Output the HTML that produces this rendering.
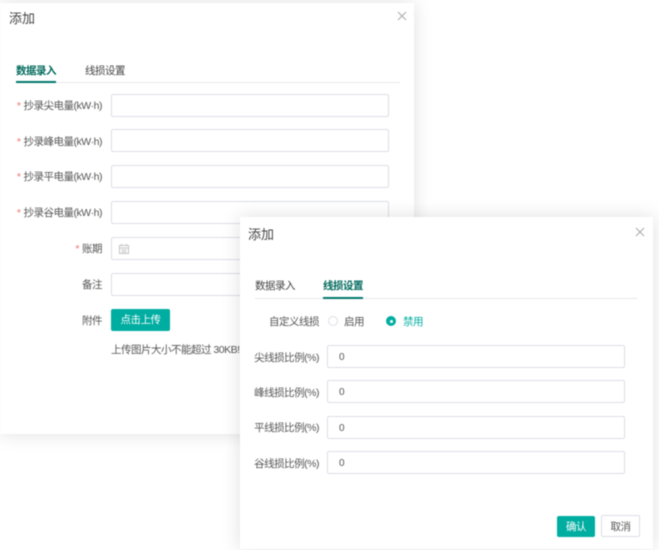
<!DOCTYPE html>
<html><head><meta charset="utf-8"><style>
html,body{margin:0;padding:0;width:659px;height:550px;overflow:hidden;background:#fff}
body{font-family:"Liberation Sans","Noto Sans CJK SC",sans-serif;color:#555;font-size:10.5px;letter-spacing:-.5px;position:relative}
#w{position:absolute;left:0;top:0;width:659px;height:550px;filter:blur(.4px)}
.d{position:absolute;background:#fff;box-shadow:0 0 18px rgba(0,0,0,.13)}
.a{position:absolute;white-space:nowrap;line-height:16px}
.r{text-align:right}
.i{position:absolute;box-sizing:border-box;border:1px solid #dcdfe6;border-radius:2px;background:#fff;height:23px}
.s{color:#f56c6c;margin-right:3px}
.t{font-size:13px;letter-spacing:0;color:#444;line-height:20px}
.tab{color:#444}
.on{color:#00695c;font-weight:bold}
.v{padding-left:11px;line-height:23px;font-size:10px;letter-spacing:0;color:#555}
</style></head><body><div id="w">
<div class="d" style="left:0;top:3px;width:414px;height:431px">
<div class="a t" style="left:9px;top:6px">添加</div>
<svg class="a" style="left:397px;top:8px" width="10" height="10"><path d="M1 1L9 9M9 1L1 9" stroke="#aaa" stroke-width="1" fill="none"/></svg>
<div class="a tab on" style="left:16px;top:60px">数据录入</div>
<div class="a tab" style="left:85px;top:60px">线损设置</div>
<div class="a" style="left:16px;top:79px;width:384px;height:1px;background:#e8e8e8"></div>
<div class="a" style="left:16px;top:78px;width:40px;height:2px;background:#00796b"></div>
<div class="a r" style="left:0;width:102px;top:95px"><span class="s">*</span>抄录尖电量(kW·h)</div>
<div class="i" style="left:111px;top:91px;width:278px"></div>
<div class="a r" style="left:0;width:102px;top:131px"><span class="s">*</span>抄录峰电量(kW·h)</div>
<div class="i" style="left:111px;top:126px;width:278px"></div>
<div class="a r" style="left:0;width:102px;top:166px"><span class="s">*</span>抄录平电量(kW·h)</div>
<div class="i" style="left:111px;top:162px;width:278px"></div>
<div class="a r" style="left:0;width:102px;top:202px"><span class="s">*</span>抄录谷电量(kW·h)</div>
<div class="i" style="left:111px;top:198px;width:278px"></div>
<div class="a r" style="left:0;width:102px;top:238px"><span class="s">*</span>账期</div>
<div class="i" style="left:111px;top:234px;width:278px"></div>
<svg class="a" style="left:118px;top:240px" width="12" height="12"><path d="M1.500 2.500H10.500V10.500H1.500ZM1.500 5H10.500M3.500 7H8.500M3.500 9H8.500M3.500 1V2.500M8.500 1V2.500" stroke="#c4c4c4" stroke-width="1" fill="none"/></svg>
<div class="a r" style="left:0;width:102px;top:274px">备注</div>
<div class="i" style="left:111px;top:270px;width:278px"></div>
<div class="a r" style="left:0;width:102px;top:310px">附件</div>
<div class="a" style="left:111px;top:306px;width:59px;height:22px;background:#00ada1;border-radius:2px;color:#fff;text-align:center;line-height:23px">点击上传</div>
<div class="a" style="left:111px;top:339px">上传图片大小不能超过 30KB!</div>
</div>
<div class="d" style="left:240px;top:217px;width:413px;height:332px">
<div class="a t" style="left:8px;top:8px">添加</div>
<svg class="a" style="left:395px;top:10px" width="10" height="10"><path d="M1 1L9 9M9 1L1 9" stroke="#aaa" stroke-width="1" fill="none"/></svg>
<div class="a tab" style="left:15px;top:61px">数据录入</div>
<div class="a tab on" style="left:83px;top:61px">线损设置</div>
<div class="a" style="left:15px;top:81px;width:382px;height:1px;background:#e8e8e8"></div>
<div class="a" style="left:83px;top:80px;width:40px;height:2px;background:#00796b"></div>
<div class="a r" style="left:0;width:79px;top:97px">自定义线损</div>
<div class="a" style="left:88px;top:99px;width:8px;height:8px;border:1px solid #dcdfe6;border-radius:50%"></div>
<div class="a" style="left:104px;top:97px">启用</div>
<div class="a" style="left:146px;top:99px;width:10px;height:10px;background:#00ada1;border-radius:50%"><div style="position:absolute;left:3.500px;top:3.500px;width:3px;height:3px;background:#fff;border-radius:50%"></div></div>
<div class="a" style="left:163px;top:97px;color:#00ada1">禁用</div>
<div class="a r" style="left:0;width:79px;top:133px">尖线损比例(%)</div>
<div class="i v" style="left:87px;top:128px;width:298px">0</div>
<div class="a r" style="left:0;width:79px;top:168px">峰线损比例(%)</div>
<div class="i v" style="left:87px;top:163px;width:298px">0</div>
<div class="a r" style="left:0;width:79px;top:203px">平线损比例(%)</div>
<div class="i v" style="left:87px;top:199px;width:298px">0</div>
<div class="a r" style="left:0;width:79px;top:239px">谷线损比例(%)</div>
<div class="i v" style="left:87px;top:234px;width:298px">0</div>
<div class="a" style="left:317px;top:299px;width:38px;height:21px;background:#00ada1;border-radius:2px;color:#fff;text-align:center;line-height:22px">确认</div>
<div class="a" style="left:361px;top:298px;width:39px;height:22px;box-sizing:border-box;border:1px solid #dcdfe6;border-radius:2px;text-align:center;line-height:22px">取消</div>
</div>
</div></body></html>
